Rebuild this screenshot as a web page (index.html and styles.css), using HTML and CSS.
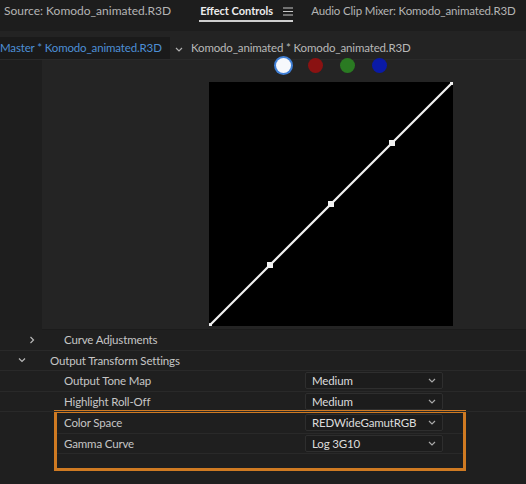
FILE: index.html
```html
<!DOCTYPE html>
<html>
<head>
<meta charset="utf-8">
<link rel="stylesheet" href="styles.css">
</head>
<body>
<div class="app">
  <div class="tabs">
    <span class="tab tab-source">Source: Komodo_animated.R3D</span>
    <span class="tab tab-active">Effect Controls
      <svg class="menu-icon" width="10" height="9" viewBox="0 0 10 9"><path d="M0 1h10M0 4.5h10M0 8h10" stroke="#c8c8c8" stroke-width="1.2"/></svg>
    </span>
    <span class="tab tab-mixer">Audio Clip Mixer: Komodo_animated.R3D</span>
  </div>
  <div class="subtabs">
    <span class="master">Master * Komodo_animated.R3D</span>
    <svg class="sub-chevron" width="8" height="5" viewBox="0 0 8 5"><path d="M1 1l3 3 3-3" fill="none" stroke="#b0b0b0" stroke-width="1.2"/></svg>
    <span class="clip">Komodo_animated * Komodo_animated.R3D</span>
  </div>
  <div class="curve-area">
    <div class="gutter"></div>
    <div class="curve-panel">
      <div class="dots">
        <span class="dot dot-white"></span>
        <span class="dot dot-red"></span>
        <span class="dot dot-green"></span>
        <span class="dot dot-blue"></span>
      </div>
      <svg class="graph" width="244" height="244" viewBox="0 0 244 244">
        <rect width="244" height="244" fill="#000"/>
        <line x1="0" y1="244" x2="244" y2="0" stroke="#f2f2f2" stroke-width="2.2"/>
        <rect x="58" y="180" width="6" height="6" fill="#f2f2f2"/>
        <rect x="119" y="119" width="6" height="6" fill="#f2f2f2"/>
        <rect x="180" y="58" width="6" height="6" fill="#f2f2f2"/>
        <circle cx="243" cy="1" r="2" fill="#f2f2f2"/>
        <circle cx="1" cy="243" r="2" fill="#f2f2f2"/>
      </svg>
    </div>
  </div>
  <div class="rows">
    <div class="row row-sub">
      <svg class="chev chev-right" width="6" height="8" viewBox="0 0 6 8"><path d="M1.5 1l3 3-3 3" fill="none" stroke="#b8b8b8" stroke-width="1.2"/></svg>
      <span class="label">Curve Adjustments</span>
    </div>
    <div class="row row-group">
      <svg class="chev chev-down" width="8" height="6" viewBox="0 0 8 6"><path d="M1 1.5l3 3 3-3" fill="none" stroke="#b8b8b8" stroke-width="1.2"/></svg>
      <span class="label">Output Transform Settings</span>
    </div>
    <div class="row row-item">
      <span class="label">Output Tone Map</span>
      <div class="select"><span>Medium</span><svg width="8" height="5" viewBox="0 0 8 5"><path d="M1 1l3 3 3-3" fill="none" stroke="#a8a8a8" stroke-width="1.2"/></svg></div>
    </div>
    <div class="row row-item">
      <span class="label">Highlight Roll-Off</span>
      <div class="select"><span>Medium</span><svg width="8" height="5" viewBox="0 0 8 5"><path d="M1 1l3 3 3-3" fill="none" stroke="#a8a8a8" stroke-width="1.2"/></svg></div>
    </div>
    <div class="highlight">
      <div class="row row-item">
        <span class="label">Color Space</span>
        <div class="select"><span>REDWideGamutRGB</span><svg width="8" height="5" viewBox="0 0 8 5"><path d="M1 1l3 3 3-3" fill="none" stroke="#a8a8a8" stroke-width="1.2"/></svg></div>
      </div>
      <div class="row row-item">
        <span class="label">Gamma Curve</span>
        <div class="select"><span>Log 3G10</span><svg width="8" height="5" viewBox="0 0 8 5"><path d="M1 1l3 3 3-3" fill="none" stroke="#a8a8a8" stroke-width="1.2"/></svg></div>
      </div>
    </div>
  </div>
</div>
</body>
</html>
```
FILE: styles.css
```css
* { box-sizing: border-box; }
html, body { margin: 0; padding: 0; background: #1f1f1f; }
body { width: 526px; height: 484px; overflow: hidden; font-family: Lato, "Noto Sans", sans-serif; font-size: 11.5px; letter-spacing: -0.15px; color: #c4c4c4; }
.app { width: 526px; height: 484px; background: #1f1f1f; }

.tabs { height: 31px; background: #1d1d1d; display: flex; align-items: flex-start; padding-top: 4px; }
.tab { color: #b4b4b4; white-space: nowrap; line-height: 14px; }
.tab-source { margin-left: 4px; font-size: 12px; letter-spacing: 0; }
.tab-active { margin-left: 28px; color: #ececec; font-weight: 700; font-size: 11px; letter-spacing: 0; display: flex; align-items: center; gap: 10px; padding: 0 0 2px 1px; border-bottom: 2px solid #cfcfcf; }
.tab-active .menu-icon { margin-top: 1px; }
.tab-mixer { margin-left: 18px; }

.subtabs { height: 29px; background: #232323; display: flex; align-items: stretch; border-bottom: 1px solid #2a2a2a; padding-top: 6px; }
.master { background: #1a1a1a; color: #4d8fd6; padding: 4px 0 0 0; width: 170px; white-space: nowrap; line-height: 14px; }
.sub-chevron { margin: 10px 0 0 5px; }
.clip { color: #b8b8b8; margin-left: 8px; padding-top: 4px; line-height: 14px; white-space: nowrap; }

.curve-area { display: flex; height: 270px; }
.gutter { width: 42px; background: #1e1e1e; }
.curve-panel { flex: 1; background: #242424; display: flex; flex-direction: column; padding-left: 167px; border-bottom: 1px solid #1b1b1b; }
.dots { display: flex; gap: 17px; margin-left: 67px; margin-top: -2px; height: 24px; align-items: flex-start; }
.dot { width: 15px; height: 15px; border-radius: 50%; display: block; }
.dot-white { background: #f6f8fc; box-shadow: 0 0 0 2px #3f7fd6; }
.dot-red { background: #8a1212; }
.dot-green { background: #2a7a22; }
.dot-blue { background: #0a1aa6; }
.graph { display: block; }

.row { height: 20.6px; display: flex; align-items: center; border-bottom: 1px solid #292929; position: relative; }
.row .label { white-space: nowrap; color: #c6c6c6; }
.row-sub { padding-left: 29px; }
.row-sub .chev { margin-right: 29px; }
.row-group { padding-left: 18px; }
.row-group .chev { margin-right: 24px; }
.row-item { padding-left: 64px; }
.row-item .select { position: absolute; left: 305px; top: 1px; }
.select { width: 138px; height: 17px; background: #1c1c1c; border: 1px solid #2e2e2e; border-radius: 2px; display: flex; align-items: center; justify-content: space-between; padding: 0 6px; color: #dcdcdc; }
.highlight { margin-left: 54px; width: 412px; height: 61px; border: 3px solid #cf7a22; margin-top: -2.4px; }
.highlight .row-item { padding-left: 7px; }
.highlight .row-item .select { left: 248px; }
```
